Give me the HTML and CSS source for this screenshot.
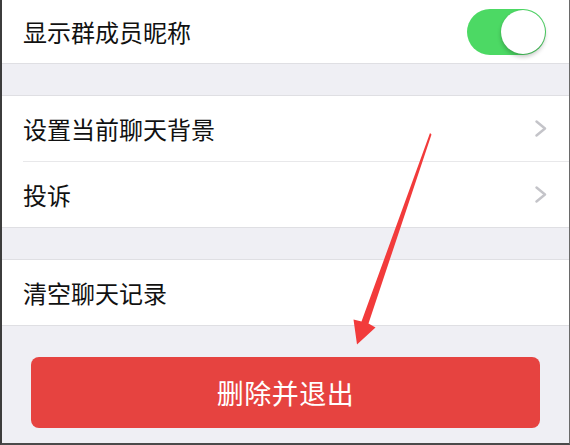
FILE: index.html
```html
<!doctype html>
<html>
<head>
    <meta charset="utf-8" />
    <title>聊天信息</title>
    <link rel="stylesheet" href="styles.css">
</head>
<body>
    <div class="screen">
        <div class="group first">
            <div class="row">
                <span class="label">显示群成员昵称</span>
                <span class="switch on"><span class="knob"></span></span>
            </div>
        </div>

        <div class="group">
            <div class="row">
                <span class="label">设置当前聊天背景</span>
                <svg class="chevron" viewBox="0 0 12 17" width="12" height="17">
                    <polyline points="1.5,1.5 10,8.5 1.5,15.5" />
                </svg>
            </div>
            <div class="row">
                <span class="label">投诉</span>
                <svg class="chevron" viewBox="0 0 12 17" width="12" height="17">
                    <polyline points="1.5,1.5 10,8.5 1.5,15.5" />
                </svg>
            </div>
        </div>

        <div class="group">
            <div class="row">
                <span class="label">清空聊天记录</span>
            </div>
        </div>

        <div class="actions">
            <button class="danger">删除并退出</button>
        </div>

        <!-- annotation arrow -->
        <svg class="mark" viewBox="0 0 570 445" width="570" height="445">
            <polygon points="430,133 431.5,134.5 368.5,323.5 375.5,327.5 357,344.5 353.5,319.5 361.5,321.5" />
        </svg>
    </div>
</body>
</html>
```

FILE: styles.css
```css
:root {
    --bg: #efeff4;
    --line: #dfdfe3;
    --text: #111;
    --green: #4cd964;
    --red: #e64340;
}
html, body {
    margin: 0;
    background-color: var(--bg);
}

.screen {
    position: relative;
    box-sizing: border-box;
    width: 570px;
    height: 445px;
    overflow: hidden;
    border-left: 2px solid #3c3c3c;
    border-right: 1px solid #6a6a6a;
    border-bottom: 2px solid #4a4a4a;
    background-color: var(--bg);
    font-family: "Noto Sans CJK SC", "Noto Sans", sans-serif;
}

.group {
    margin-top: 31px;
    background-color: #fff;
    border-top: 1px solid var(--line);
    border-bottom: 1px solid var(--line);
}
.group.first {
    margin-top: 0;
    border-top: none;
}
    .row {
        height: 65px;
        display: flex;
        align-items: center;
        justify-content: space-between;
        padding: 0 21px 0 21px;
        position: relative;
    }
    .group.first .row {
        height: 63px;
    }
    .row + .row {
        border-top: 1px solid #e8e8ea;
        margin-left: 21px;
        padding-left: 0;
    }
        .label {
            font-size: 24px;
            color: var(--text);
            line-height: 1;
        }
        .chevron {
            margin-right: 1px;
        }
            .chevron polyline {
                fill: none;
                stroke: #c4c4c9;
                stroke-width: 2.4;
                stroke-linecap: round;
                stroke-linejoin: round;
            }

.switch {
    display: flex;
    justify-content: flex-end;
    align-items: center;
    box-sizing: border-box;
    width: 79px;
    height: 46px;
    padding: 1px;
    border-radius: 23px;
    margin-right: 2px;
    margin-top: 1px;
}
.switch.on {
    background-color: var(--green);
}
    .knob {
        width: 44px;
        height: 44px;
        border-radius: 50%;
        background-color: #fff;
        box-shadow: 0 3px 4px rgba(0, 0, 0, 0.22), 0 0 1px rgba(0, 0, 0, 0.15);
    }

.actions {
    padding: 31px 29px 0 29px;
}
    .danger {
        display: block;
        width: 100%;
        height: 71px;
        border: none;
        border-radius: 8px;
        background-color: var(--red);
        color: #fff;
        font-family: inherit;
        font-size: 27px;
        letter-spacing: 0.5px;
    }

.mark {
    position: absolute;
    top: 0;
    left: -2px;
    pointer-events: none;
}
    .mark polygon {
        fill: #f23b3b;
    }
```
